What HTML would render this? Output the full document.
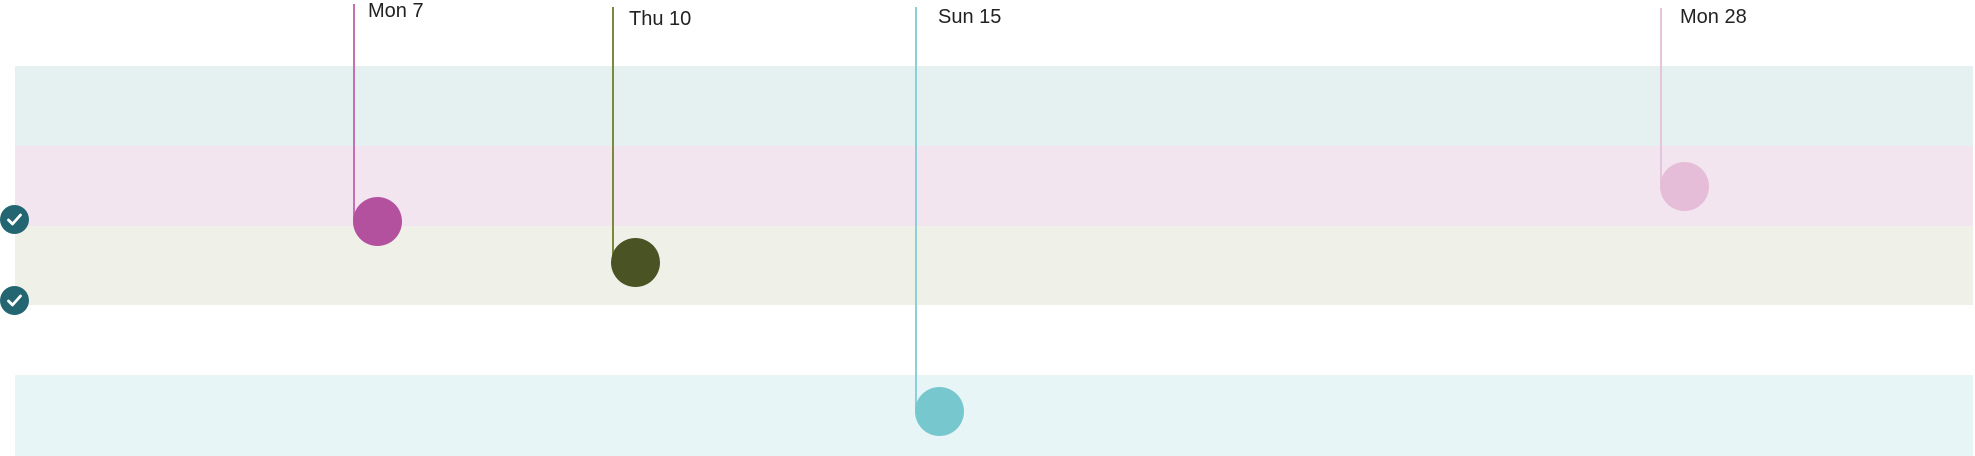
<!DOCTYPE html>
<html><head><meta charset="utf-8"><style>
body{margin:0;width:1975px;height:456px;position:relative;background:#fff;overflow:hidden;font-family:"Liberation Sans",sans-serif}
.b{position:absolute;left:15px;width:1958px;height:80px}
.l{position:absolute;width:2px}
.c{position:absolute;width:49px;height:49px;border-radius:50%}
.t{position:absolute;font-size:20px;color:#222;line-height:1}
.k{position:absolute;left:0;width:29px;height:29px;border-radius:50%;background:#236570}
</style></head><body>
<div class="b" style="top:66px;background:#e5f1f1"></div>
<div class="b" style="top:146px;background:#f2e5ef"></div>
<div class="b" style="top:226px;height:79px;background:#eff1e9"></div>
<div class="b" style="top:375px;height:81px;background:#e7f5f6"></div>

<div class="l" style="left:353px;top:4px;height:218px;background:#c76fb5"></div>
<div class="c" style="left:353px;top:197px;background:#b4519f"></div>
<div class="t" style="left:368px;top:1px">Mon 7</div>

<div class="l" style="left:612px;top:7px;height:256px;background:#7b8a3a"></div>
<div class="c" style="left:611px;top:238px;background:#4a5323"></div>
<div class="t" style="left:629px;top:9px">Thu 10</div>

<div class="l" style="left:915px;top:7px;height:405px;background:#8ad0d8"></div>
<div class="c" style="left:915px;top:387px;background:#77c7cf"></div>
<div class="t" style="left:938px;top:7px">Sun 15</div>

<div class="l" style="left:1660px;top:8px;height:178px;background:#e6c4dc"></div>
<div class="c" style="left:1660px;top:162px;background:#e6bdd8"></div>
<div class="t" style="left:1680px;top:7px">Mon 28</div>

<div class="k" style="top:205px"><svg width="29" height="29" viewBox="0 0 29 29"><path d="M8.5 15 L12.5 19 L20.5 10" fill="none" stroke="#fff" stroke-width="2.8" stroke-linecap="round" stroke-linejoin="round"/></svg></div>
<div class="k" style="top:286px"><svg width="29" height="29" viewBox="0 0 29 29"><path d="M8.5 15 L12.5 19 L20.5 10" fill="none" stroke="#fff" stroke-width="2.8" stroke-linecap="round" stroke-linejoin="round"/></svg></div>
</body></html>
